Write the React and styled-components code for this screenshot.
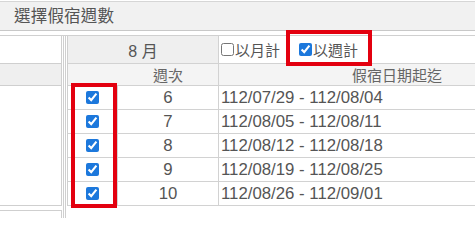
import React from 'react'
import styled, { createGlobalStyle } from 'styled-components'

const GlobalStyle = createGlobalStyle`
	html, body {
		margin: 0;
		padding: 0;
		background: #fff;
		overflow: hidden;
	}
	body {
		font-family: "Liberation Sans", "Noto Sans CJK TC", sans-serif;
		color: #555;
	}
`

const weeks = [
	{ no: 6, range: '112/07/29 - 112/08/04' },
	{ no: 7, range: '112/08/05 - 112/08/11' },
	{ no: 8, range: '112/08/12 - 112/08/18' },
	{ no: 9, range: '112/08/19 - 112/08/25' },
	{ no: 10, range: '112/08/26 - 112/09/01' },
]

const Page = styled.div`
	position: relative;
	width: 475px;
	height: 218px;
	overflow: hidden;
`

const TitleBar = styled.div`
	height: 28px;
	margin-top: 1px;
	border-top: 1px solid #d6d6d6;
	border-bottom: 1px solid #c8c8c8;
	background: #f1f1f1;
	padding-left: 14px;
	font-size: 16.5px;
	line-height: 28px;
	color: #555;
	letter-spacing: 0.2px;
`

const Body = styled.div`
	display: flex;
	margin-top: 4px;
	border-top: 1px solid #d0d0d0;
	height: 200px;
`

const LeftCol = styled.div`
	flex: none;
	width: 64px;
	box-sizing: border-box;
	border-right: 1px solid #cfcfcf;
	padding-right: 1px;
	display: flex;
	flex-direction: column;
`

const LeftCell = styled.div`
	height: ${p => p.h}px;
	box-sizing: border-box;
	border-right: 1px solid #cfcfcf;
	border-bottom: 1px solid #cfcfcf;
	background: ${p => (p.gray ? '#efefef' : '#fff')};
	margin-top: ${p => p.gap || 0}px;
	border-top: ${p => (p.gap ? '1px solid #cfcfcf' : 'none')};
`

const RightCol = styled.div`
	flex: none;
	margin-left: 1px;
	border-left: 1px solid #cfcfcf;
	padding-left: 1px;
`

const Grid = styled.div`
	display: grid;
	grid-template-columns: 50px 101px 356px;
	border-left: 1px solid #cfcfcf;
`

const Cell = styled.div`
	box-sizing: border-box;
	height: ${p => p.h}px;
	grid-column: ${p => p.span || 'auto'};
	display: flex;
	align-items: center;
	justify-content: ${p => p.align || 'center'};
	padding-left: ${p => p.pl || 0}px;
	border-bottom: 1px solid #d2d2d2;
	border-right: ${p => (p.noRight ? 'none' : '1px solid #d2d2d2')};
	background: ${p => p.bg || '#fff'};
	font-size: ${p => p.fs || 15}px;
	color: ${p => p.color || '#555'};
	white-space: nowrap;
`

const Option = styled.label`
	display: inline-flex;
	align-items: center;
	margin-right: ${p => p.mr || 0}px;
	font-size: 15px;
	color: #555;
`

const Check = styled.input.attrs({ type: 'checkbox' })`
	width: 13px;
	height: 13px;
	margin: 0 1px 0 0;
	accent-color: #1c78dc;
`

const Highlight = styled.div`
	position: absolute;
	left: ${p => p.x}px;
	top: ${p => p.y}px;
	width: ${p => p.w}px;
	height: ${p => p.h}px;
	box-sizing: border-box;
	border: 4px solid #e3000f;
	pointer-events: none;
`

export default function App() {
	return (
		<Page lang="zh-Hant">
			<GlobalStyle />
			<TitleBar>選擇假宿週數</TitleBar>
			<Body>
				<LeftCol>
					<LeftCell h={28} />
					<LeftCell h={22} gray />
					<LeftCell h={120} />
					<LeftCell h={20} gap={4} />
				</LeftCol>
				<RightCol>
					<Grid>
						<Cell h={28} span="span 2" bg="#efefef" fs={16}>8 月</Cell>
						<Cell h={28} align="flex-start" pl={2} noRight>
							<Option mr={19}>
								<Check />以月計
							</Option>
							<Option>
								<Check defaultChecked />以週計
							</Option>
						</Cell>
						<Cell h={22} bg="#f4f4f4" noRight />
						<Cell h={22} bg="#f4f4f4" color="#666">週次</Cell>
						<Cell h={22} bg="#f4f4f4" color="#666" noRight>假宿日期起迄</Cell>
						{weeks.map(w => (
							<React.Fragment key={w.no}>
								<Cell h={24}>
									<Check defaultChecked />
								</Cell>
								<Cell h={24} fs={16.8}>{w.no}</Cell>
								<Cell h={24} align="flex-start" pl={2} fs={16.8} noRight>
									{w.range}
								</Cell>
							</React.Fragment>
						))}
					</Grid>
				</RightCol>
			</Body>
			<Highlight x={71} y={83} w={46} h={125} />
			<Highlight x={286} y={30} w={86} h={36} />
		</Page>
	)
}
